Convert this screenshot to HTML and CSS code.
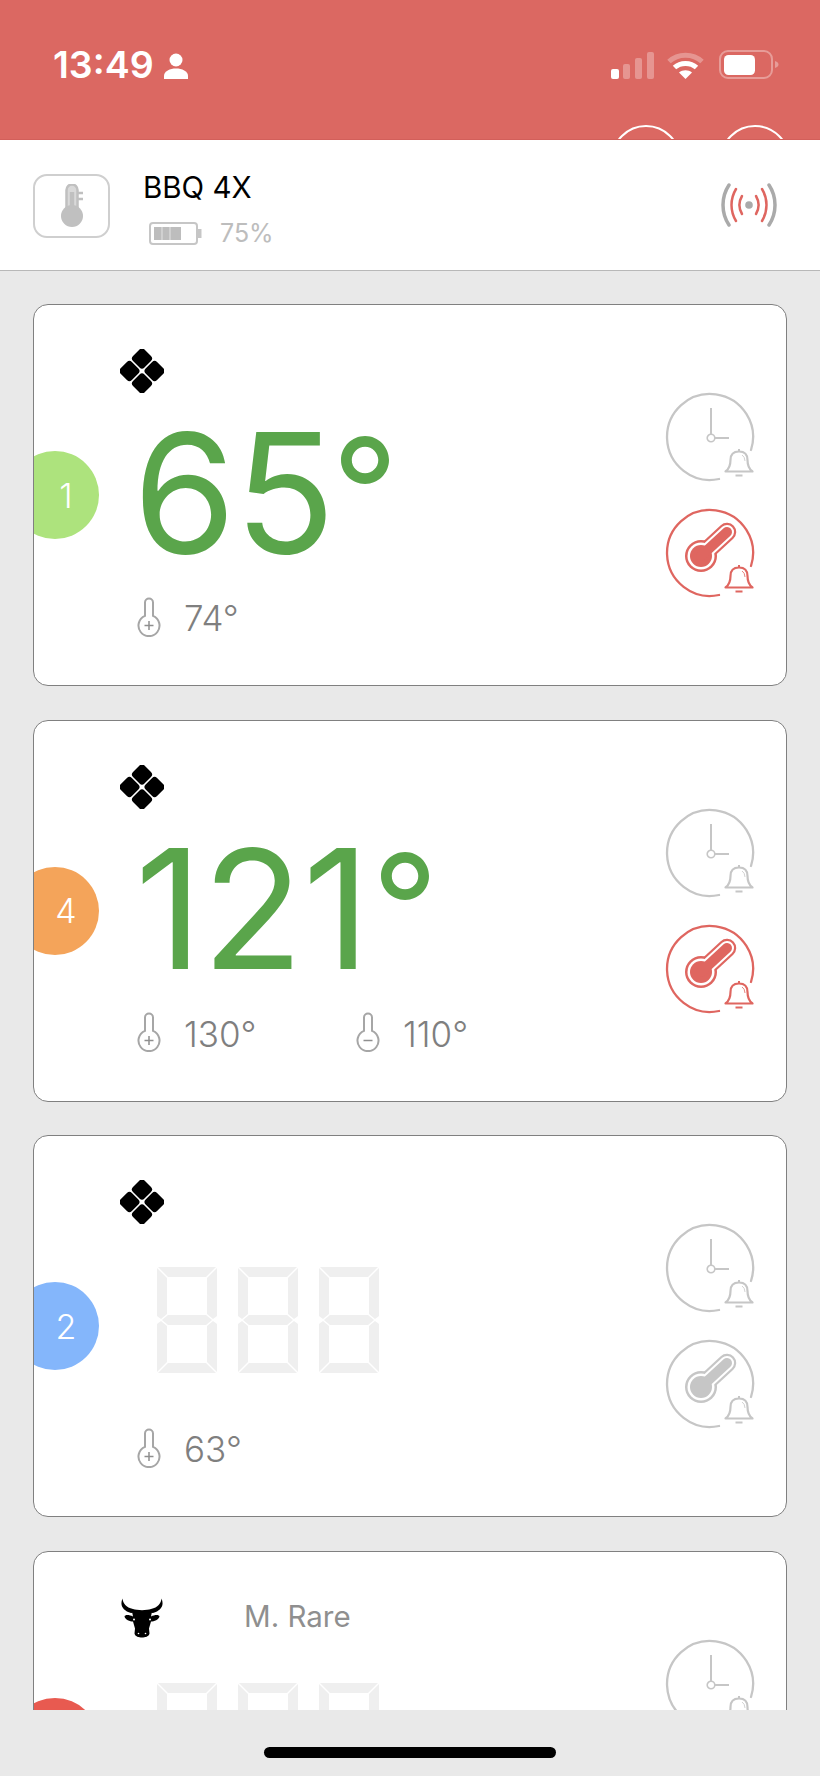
FILE: index.html
```html
<!DOCTYPE html>
<html lang="en">
<head>
  <meta charset="utf-8" />
  <meta name="viewport" content="width=device-width, initial-scale=1.0"/>
  <title>BBQ 4X</title>
  <link rel="stylesheet" href="styles.css">
</head>
<body>

  <!-- shared icons -->
  <svg class="sprite" aria-hidden="true">
    <symbol id="i-cut" viewBox="0 0 44 44">
      <g transform="rotate(45 22 22)">
        <rect x="5" y="5" width="16.200" height="16.200" rx="3.500"/>
        <rect x="22.800" y="5" width="16.200" height="16.200" rx="3.500"/>
        <rect x="5" y="22.800" width="16.200" height="16.200" rx="3.500"/>
        <rect x="22.800" y="22.800" width="16.200" height="16.200" rx="3.500"/>
      </g>
    </symbol>
    <symbol id="i-bull" viewBox="0 0 44 39">
      <path d="M2.5 0C-.5 7 3 12 11 14.500C15 13.500 29 13.500 33 14.500C41 12 44.500 7 41.500 0C41 5 38 9 31 10.500C27 12 17 12 13 10.500C6 9 3 5 2.500 0Z"/>
      <path d="M12 13H32L31 18C35 16 39 16 39.500 18C39 21 34 23 31 23L29 30L29.500 35C29 38 25 39 22 39C19 39 15 38 14.500 35L15 30L13 23C10 23 5 21 4.500 18C5 16 9 16 13 18Z"/>
      <circle cx="14" cy="21" r="1" fill="#fff"/>
      <circle cx="30" cy="21" r="1" fill="#fff"/>
      <circle cx="18.500" cy="35" r=".8" fill="#fff"/>
      <circle cx="25.500" cy="35" r=".8" fill="#fff"/>
    </symbol>
    <symbol id="i-limit-up" viewBox="0 0 24 40">
      <path d="M8 18.900V5.500a4 4 0 0 1 8 0V18.900A10.500 10.500 0 1 1 8 18.900Z" fill="none" stroke="#a6a6a6" stroke-width="2"/>
      <path d="M7.500 28.500H16.500M12 24V33" fill="none" stroke="#8f8f8f" stroke-width="1.500"/>
    </symbol>
    <symbol id="i-limit-down" viewBox="0 0 24 40">
      <path d="M8 18.900V5.500a4 4 0 0 1 8 0V18.900A10.500 10.500 0 1 1 8 18.900Z" fill="none" stroke="#a6a6a6" stroke-width="2"/>
      <path d="M7.500 28.500H16.500" fill="none" stroke="#8f8f8f" stroke-width="1.500"/>
    </symbol>
    <symbol id="i-bell" viewBox="-45 -45 90 90">
      <path d="M15.500 34.500Q20.500 31 20.500 23Q20.500 14.500 29 14.500Q37.500 14.500 37.500 23Q37.500 31 42.500 34.500Z" fill="#fff" stroke="currentColor" stroke-width="2.200" stroke-linejoin="round"/>
      <path d="M29 14.500V12M25.500 38.500H32.500" fill="none" stroke="currentColor" stroke-width="2"/>
      <path d="M32 18Q34.800 19.500 35 24" fill="none" stroke="currentColor" stroke-width=".8"/>
    </symbol>
    <symbol id="i-timer" viewBox="-45 -45 90 90">
      <path d="M41 13A43 43 0 1 0 9 42" fill="none" stroke="currentColor" stroke-width="2.300" stroke-linecap="round"/>
      <path d="M1 -3V-29M5 1H19" fill="none" stroke="currentColor" stroke-width="2"/>
      <circle cx="1" cy="1" r="3.800" fill="none" stroke="currentColor" stroke-width="1.600"/>
      <use href="#i-bell" x="-45" y="-45" width="90" height="90"/>
    </symbol>
    <symbol id="i-temp" viewBox="-45 -45 90 90">
      <path d="M41 13A43 43 0 1 0 9 42" fill="none" stroke="currentColor" stroke-width="2.300" stroke-linecap="round"/>
      <g stroke-linecap="round">
        <circle cx="-9" cy="3" r="16" fill="currentColor"/>
        <path d="M-9 3L17 -21" stroke="currentColor" stroke-width="18.500"/>
        <circle cx="-9" cy="3" r="13.500" fill="#fff"/>
        <path d="M-9 3L17 -21" stroke="#fff" stroke-width="14"/>
        <circle cx="-9" cy="3" r="11" fill="currentColor"/>
        <path d="M-9 3L17 -21" stroke="currentColor" stroke-width="10"/>
      </g>
      <use href="#i-bell" x="-45" y="-45" width="90" height="90"/>
    </symbol>
    <symbol id="i-seg" viewBox="0 0 60 106">
      <polygon points="1,0 59,0 49,10 11,10"/>
      <polygon points="0,1 10,11 10,47 4,52 0,49"/>
      <polygon points="60,1 50,11 50,47 56,52 60,49"/>
      <polygon points="5,53 11,48 49,48 55,53 49,58 11,58"/>
      <polygon points="0,57 4,54 10,59 10,95 0,105"/>
      <polygon points="60,57 56,54 50,59 50,95 60,105"/>
      <polygon points="11,96 49,96 59,106 1,106"/>
    </symbol>
  </svg>

  <div class="screen">

    <div class="status">
      <div class="status-row">
        <span class="time">13:49</span>
        <svg class="person" viewBox="0 0 24 26" fill="#fff">
          <circle cx="12" cy="7" r="6.500"/>
          <path d="M0 26V23C0 18 6 15.500 12 15.500S24 18 24 23V26Z"/>
        </svg>
        <svg class="bars" viewBox="0 0 43 27" fill="#fff">
          <rect x="0" y="17" width="8" height="10" rx="2"/>
          <rect x="12" y="12" width="7" height="15" rx="2" opacity=".3"/>
          <rect x="24" y="6" width="7" height="21" rx="2" opacity=".3"/>
          <rect x="36" y="0" width="7" height="27" rx="2" opacity=".3"/>
        </svg>
        <svg class="wifi" viewBox="0 0 37 27" fill="none" stroke="#fff" stroke-width="5">
          <path d="M2 9.500C11 1 26 1 35 9.500" opacity=".3"/>
          <path d="M7.500 15.500C13.500 10 23.500 10 29.500 15.500"/>
          <path d="M18.500 27L12 20.500C15.500 17.500 21.500 17.500 25 20.500Z" fill="#fff" stroke="none"/>
        </svg>
        <svg class="phone-batt" viewBox="0 0 60 29">
          <rect x="1" y="1" width="52" height="27" rx="8" fill="none" stroke="#fff" stroke-width="2" opacity=".35"/>
          <rect x="5" y="5" width="31" height="20" rx="4.500" fill="#fff"/>
          <path d="M56 11C58.500 12 59.500 13 59.500 14.500S58.500 17 56 18Z" fill="#fff" opacity=".35"/>
        </svg>
      </div>
      <div class="nav-btns">
        <span class="nav-btn"></span>
        <span class="nav-btn"></span>
      </div>
    </div>

    <header class="device">
      <div class="device-icon">
        <svg width="30" height="44" viewBox="0 0 30 44">
          <path d="M9.500 24V6a5.500 5.500 0 0 1 11 0V24" fill="#d9d9d9" stroke="#c0c0c0" stroke-width="2.500"/>
          <circle cx="15" cy="32" r="11" fill="#c0c0c0"/>
          <path d="M12.800 24V8H17.200V24Z" fill="#c0c0c0"/>
          <path d="M21 9H26M21 15H26" stroke="#c0c0c0" stroke-width="2.500"/>
        </svg>
      </div>
      <div class="device-info">
        <div class="device-name">BBQ 4X</div>
        <div class="device-batt">
          <svg width="54" height="23" viewBox="0 0 54 23">
            <rect x="1" y="1" width="47" height="21" rx="3" fill="none" stroke="#c6c6c6" stroke-width="2"/>
            <rect x="5" y="5" width="27" height="13" fill="#bdbdbd"/>
            <path d="M13 5V18M21 5V18" stroke="#e4e4e4" stroke-width="1"/>
            <path d="M49 7H52.500V16H49Z" fill="#c6c6c6"/>
          </svg>
          <span>75%</span>
        </div>
      </div>
      <svg class="signal" width="56" height="46" viewBox="-28 -23 56 46" fill="none" stroke-linecap="round">
        <circle r="3.800" fill="#aaa"/>
        <path d="M-20 -20C-28 -8 -28 8 -20 20M20 -20C28 -8 28 8 20 20" stroke="#aaa" stroke-width="3.500"/>
        <path d="M-13 -16C-19 -6 -19 6 -13 16M13 -16C19 -6 19 6 13 16" stroke="#df6660" stroke-width="2.500"/>
        <path d="M-7 -9C-10.500 -3 -10.500 3 -7 9M7 -9C10.500 -3 10.500 3 7 9" stroke="#df6660" stroke-width="2.500"/>
      </svg>
    </header>

    <main class="probes">

      <section class="card">
        <span class="badge badge-green">1</span>
        <div class="card-main">
          <div class="food"><svg class="food-icon"><use href="#i-cut"/></svg></div>
          <div class="reading"><span class="temp">65<span class="deg">°</span></span></div>
          <div class="limits">
            <div class="limit"><svg class="limit-icon"><use href="#i-limit-up"/></svg><span>74°</span></div>
          </div>
        </div>
        <div class="alarms">
          <svg class="alarm"><use href="#i-timer"/></svg>
          <svg class="alarm alarm-on"><use href="#i-temp"/></svg>
        </div>
      </section>

      <section class="card">
        <span class="badge badge-orange">4</span>
        <div class="card-main">
          <div class="food"><svg class="food-icon"><use href="#i-cut"/></svg></div>
          <div class="reading"><span class="temp temp-wide">121<span class="deg">°</span></span></div>
          <div class="limits">
            <div class="limit"><svg class="limit-icon"><use href="#i-limit-up"/></svg><span>130°</span></div>
            <div class="limit"><svg class="limit-icon"><use href="#i-limit-down"/></svg><span>110°</span></div>
          </div>
        </div>
        <div class="alarms">
          <svg class="alarm"><use href="#i-timer"/></svg>
          <svg class="alarm alarm-on"><use href="#i-temp"/></svg>
        </div>
      </section>

      <section class="card">
        <span class="badge badge-blue">2</span>
        <div class="card-main">
          <div class="food"><svg class="food-icon"><use href="#i-cut"/></svg></div>
          <div class="reading">
            <div class="segs">
              <svg class="seg"><use href="#i-seg"/></svg>
              <svg class="seg"><use href="#i-seg"/></svg>
              <svg class="seg"><use href="#i-seg"/></svg>
            </div>
          </div>
          <div class="limits">
            <div class="limit"><svg class="limit-icon"><use href="#i-limit-up"/></svg><span>63°</span></div>
          </div>
        </div>
        <div class="alarms">
          <svg class="alarm"><use href="#i-timer"/></svg>
          <svg class="alarm"><use href="#i-temp"/></svg>
        </div>
      </section>

      <section class="card">
        <span class="badge badge-red"></span>
        <div class="card-main">
          <div class="food">
            <svg class="food-icon"><use href="#i-bull"/></svg>
            <span class="food-name">M. Rare</span>
          </div>
          <div class="reading">
            <div class="segs">
              <svg class="seg"><use href="#i-seg"/></svg>
              <svg class="seg"><use href="#i-seg"/></svg>
              <svg class="seg"><use href="#i-seg"/></svg>
            </div>
          </div>
        </div>
        <div class="alarms">
          <svg class="alarm"><use href="#i-timer"/></svg>
          <svg class="alarm"><use href="#i-temp"/></svg>
        </div>
      </section>

    </main>

    <footer class="home-bar"><span class="home-pill"></span></footer>

  </div>

</body>
</html>
```

FILE: styles.css
```css
:root {
  --red:    #db6862;
  --bg:     #e9e9e9;
  --line:   #808080;
  --green:  #5aa54b;
  --grey:   #7f7f7f;
  --icon:   #c6c6c6;
  --alert:  #df6660;
}
*, *::before, *::after { box-sizing: border-box; margin:0; padding:0; }
body {
  font-family: "Inter","Liberation Sans",sans-serif;
  background: var(--bg);
  width:820px;height:1776px;overflow:hidden;
}
.sprite { display:none; }
.screen { display:flex;flex-direction:column;height:1776px; }

/* Status bar */
.status {
  height:140px;flex:none;overflow:hidden;
  background:var(--red);border-bottom:1px solid #d25f5a;
  padding:50px 41px 0 53px;
}
.status-row { display:flex;align-items:center;height:29px; }
.time { color:#fff;font-size:37.500px;font-weight:600;line-height:29px;width:111px; }
.person { width:24px;height:26px;margin-top:3px; }
.bars { width:43px;height:27px;margin-left:auto;margin-top:1px; }
.wifi { width:37px;height:27px;margin-left:13px;margin-top:1px; }
.phone-batt { width:60px;height:29px;margin-left:15px; }
.nav-btns { display:flex;justify-content:flex-end;gap:39px;margin-top:46px;margin-right:-11px; }
.nav-btn { width:70px;height:70px;flex:none;border:2px solid #fff;border-radius:50%; }

/* Device header */
.device {
  height:131px;flex:none;background:#fff;
  border-bottom:1px solid #b8b8b8;
  display:flex;align-items:center;
  padding:0 43px 0 33px;
}
.device-icon {
  width:77px;height:64px;margin-top:1px;
  border:2px solid #cfcfcf;border-radius:14px;
  display:flex;align-items:center;justify-content:center;
}
.device-info { margin-left:33px;margin-top:7px; }
.device-name { font-size:29.500px;line-height:34px;color:#000; }
.device-batt { display:flex;align-items:center;gap:17px;margin-top:15px;margin-left:6px;color:#bdbdbd;font-size:25px;line-height:28px; }
.signal { margin-left:auto; }

/* Probe cards */
.probes {
  flex:1;min-height:0;overflow:hidden;
  display:flex;flex-direction:column;gap:33.500px;
  padding:33px 33px 0 33px;
}
.card {
  position:relative;flex:none;height:382px;
  background:#fff;border:1.500px solid var(--line);border-radius:15px;
  overflow:hidden;
  display:flex;justify-content:space-between;
  padding:0 31px 0 0;
}
.badge {
  position:absolute;left:-23px;top:146px;
  width:88px;height:88px;border-radius:50%;
  padding-left:22px;
  display:flex;align-items:center;justify-content:center;
  color:#fff;font-size:34px;font-weight:300;
}
.badge-green  { background:#ade37d; }
.badge-orange { background:#f4a45a; }
.badge-blue   { background:#84b6fb; }
.badge-red    { background:#e85a50; }

.card-main { display:flex;flex-direction:column;padding:44px 0 0 86px;width:580px; }
.food { display:flex;align-items:center;height:44px; }
.food-icon { width:44px;height:44px;fill:#000; }
.food-name { margin-left:80px;margin-top:-4px;font-size:29.500px;color:#8f8f8f; }

.reading { height:200px;display:flex;align-items:center; }
.temp { font-size:166px;line-height:1;color:var(--green);margin-left:13px;letter-spacing:-1.500px; }
.temp-wide { margin-left:15px;letter-spacing:-.5px; }
.deg { font-size:146px;vertical-align:10px;margin-left:-2px; }
.temp-wide .deg { margin-left:2px; }
.segs { display:flex;gap:21px;margin-left:37px;margin-top:-8px; }
.seg { width:60px;height:106px;fill:#efefef; }

.limits { display:flex;margin-top:2px;margin-left:17px; }
.limit {
  display:flex;align-items:center;gap:23px;width:219px;
  color:var(--grey);font-size:35px;line-height:40px;font-weight:300;
}
.limit span { margin-top:3px; }
.limit-icon { width:24px;height:40px; }

.alarms { display:flex;flex-direction:column;gap:26px;padding-top:87px; }
.alarm { width:90px;height:90px;color:var(--icon); }
.alarm-on { color:var(--alert); }

/* Home indicator */
.home-bar { height:66px;flex:none;background:var(--bg);display:flex;justify-content:center;padding-top:37px; }
.home-pill { width:292px;height:11px;border-radius:6px;background:#000; }
```
